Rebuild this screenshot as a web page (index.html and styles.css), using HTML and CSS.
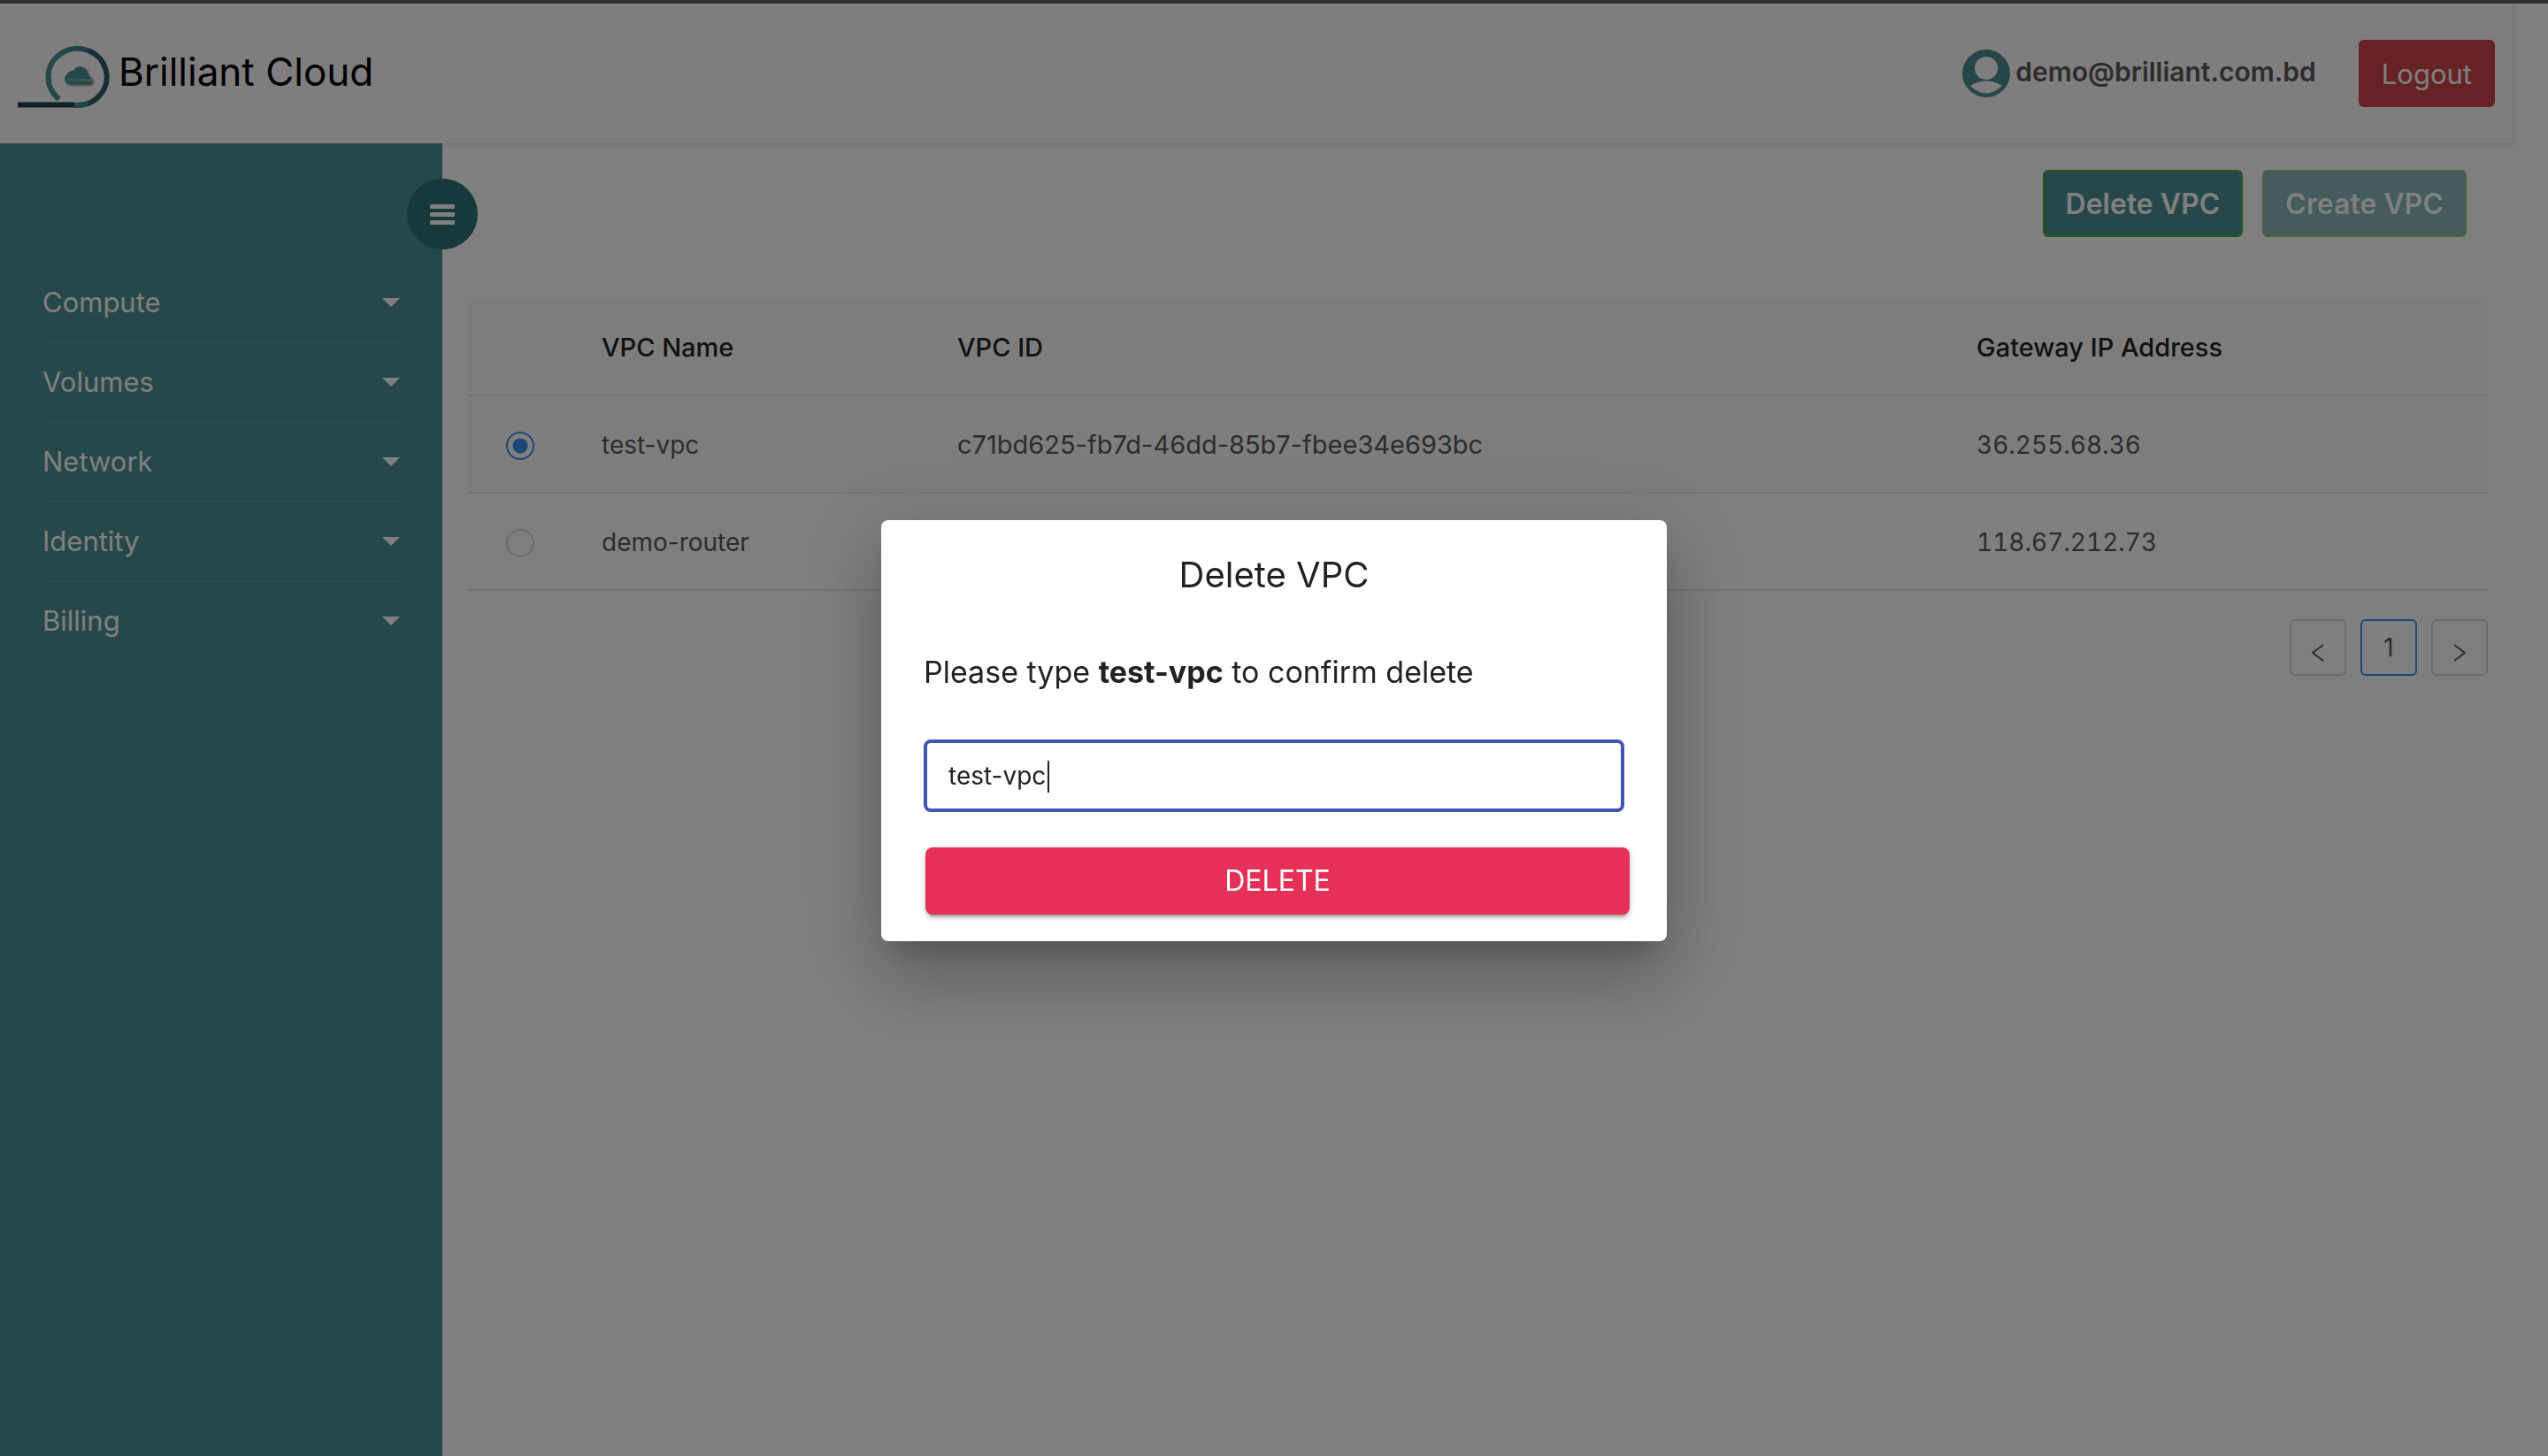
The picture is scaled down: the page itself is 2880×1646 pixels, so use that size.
FILE: index.html
```html
<!DOCTYPE html>
<html lang="en">
<head>
<meta charset="utf-8">
<title>Brilliant Cloud</title>
<link rel="stylesheet" href="styles.css">
</head>
<body>
<header class="topbar">
  <a class="brand" href="#">
    <svg class="brand-mark" viewBox="0 0 108 72" aria-hidden="true">
      <defs>
        <linearGradient id="ring" x1="0" y1="0" x2="1" y2="0">
          <stop offset="0" stop-color="#4e9193"/><stop offset=".66" stop-color="#3d8588"/><stop offset=".7" stop-color="#2f6474"/><stop offset="1" stop-color="#2b5a6c"/>
        </linearGradient>
      </defs>
      <path d="M47 61A33 32 0 1 1 68 68H62" fill="none" stroke="url(#ring)" stroke-width="6"/>
      <path d="M0 67.500H64" stroke="#1d424c" stroke-width="6" fill="none"/>
      <path class="cloud" d="M58 44a6 6 0 0 1-5-6 6 6 0 0 1 3-5 6 6 0 0 1 7-4 8.500 8.500 0 0 1 16 3 5 5 0 0 1 1 3 5 5 0 0 1 4 4 5 5 0 0 1-4 5z"/>
      <text class="cloud-text" x="69" y="41" text-anchor="middle">brilliant<tspan font-weight="700">cloud</tspan></text>
    </svg>
    <span class="brand-name">Brilliant Cloud</span>
  </a>
  <div class="account">
    <svg class="avatar" viewBox="0 0 54 54" aria-hidden="true">
      <circle cx="27" cy="27" r="27" fill="#4a8f91"/>
      <circle cx="27" cy="21" r="13" fill="#fffafc"/>
      <path d="M9 41Q27 30 45 41Q27 58 9 41Z" fill="#fffafc"/>
    </svg>
    <span class="email">demo@brilliant.com.bd</span>
    <button class="logout" type="button">Logout</button>
  </div>
</header>
<div class="shell">
  <nav class="sidebar" aria-label="Main">
    <button class="toggle" type="button" aria-label="Toggle menu">
      <svg viewBox="0 0 28 24" aria-hidden="true"><g fill="#fff"><rect y="1" width="28" height="5" rx="1"/><rect y="10" width="28" height="5" rx="1"/><rect y="19" width="28" height="5" rx="1"/></g></svg>
    </button>
    <ul class="menu">
      <li><a href="#">Compute</a></li>
      <li><a href="#">Volumes</a></li>
      <li><a href="#">Network</a></li>
      <li><a href="#">Identity</a></li>
      <li><a href="#">Billing</a></li>
    </ul>
  </nav>
  <main class="content">
    <div class="actions">
      <button class="action" type="button">Delete VPC</button>
      <button class="action" type="button" disabled>Create VPC</button>
    </div>
    <table class="vpcs">
      <colgroup><col class="c-pick"><col class="c-name"><col class="c-id"><col class="c-ip"></colgroup>
      <thead>
        <tr><td></td><th scope="col">VPC Name</th><th scope="col">VPC ID</th><th scope="col">Gateway IP Address</th></tr>
      </thead>
      <tbody>
        <tr class="selected">
          <td class="pick"><input type="radio" name="vpc" aria-label="test-vpc" checked></td>
          <td>test-vpc</td><td class="id">c71bd625-fb7d-46dd-85b7-fbee34e693bc</td><td class="ip">36.255.68.36</td>
        </tr>
        <tr>
          <td class="pick"><input type="radio" name="vpc" aria-label="demo-router"></td>
          <td>demo-router</td><td class="id"></td><td class="ip">118.67.212.73</td>
        </tr>
      </tbody>
    </table>
    <nav class="pager" aria-label="Pages">
      <button type="button" aria-label="Previous page"><svg viewBox="0 0 14 20" aria-hidden="true"><path d="M13 1L1 10l12 9"/></svg></button>
      <button type="button" class="current">1</button>
      <button type="button" aria-label="Next page"><svg viewBox="0 0 14 20" aria-hidden="true"><path d="M1 1l12 9-12 9"/></svg></button>
    </nav>
  </main>
</div>
<div class="overlay">
  <form class="dialog" role="dialog" aria-modal="true" aria-labelledby="dialog-title">
    <h2 id="dialog-title">Delete VPC</h2>
    <label for="confirm">Please type <b>test-vpc</b> to confirm delete</label>
    <div class="field">
      <input id="confirm" type="text" value="test-vpc">
      <span class="caret"></span>
    </div>
    <button class="confirm" type="submit">DELETE</button>
  </form>
</div>
</body>
</html>
```
FILE: styles.css
```css
* { box-sizing: border-box; }

body {
  margin: 0;
  min-height: 100vh;
  display: flex;
  flex-direction: column;
  border-top: 4px solid #5c5f66;
  background: #fff;
  font: 30px/40px Inter, "Liberation Sans", sans-serif;
  color: #595959;
}

button, input { font: inherit; margin: 0; }
a { color: inherit; text-decoration: none; }

/* Header */
.topbar {
  display: flex;
  align-items: center;
  justify-content: space-between;
  height: 158px;
  margin-right: 40px;
  padding: 0 20px;
  background: #fffafc;
  box-shadow: 2px 2px 6px rgba(0, 0, 0, .12);
}
.brand { display: flex; align-items: center; gap: 6px; color: #000; }
.brand-mark { width: 108px; height: 72px; margin-top: 8px; }
.cloud { fill: #498f90; filter: drop-shadow(2px 2px 1px rgba(0, 0, 0, .45)); }
.cloud-text { fill: #a9c9c9; font-size: 5px; }
.brand-name { padding-bottom: 4px; font-size: 44px; line-height: 56px; }
.account { display: flex; align-items: center; }
.avatar { width: 54px; height: 54px; }
.email { margin: 0 48px 0 6px; padding-bottom: 4px; font-weight: 600; }
.logout {
  height: 76px;
  padding: 2px 26px 0;
  border: 0;
  border-radius: 6px;
  background: #cc444a;
  color: #fff;
  font-size: 31px;
}

/* Sidebar */
.shell { flex: 1; display: flex; }
.sidebar {
  position: relative;
  width: 500px;
  padding: 136px 48px 0;
  background: #4e9193;
}
.toggle {
  position: absolute;
  top: 40px;
  right: -40px;
  width: 80px;
  height: 80px;
  display: grid;
  place-items: center;
  padding: 0;
  border: 0;
  border-radius: 50%;
  background: #2f7275;
}
.toggle svg { width: 28px; height: 24px; }
.menu { margin: 0; padding: 0; list-style: none; font-size: 31px; }
.menu a {
  display: flex;
  align-items: center;
  justify-content: space-between;
  height: 90px;
  border-bottom: 2px solid #589899;
  color: #fff;
}
.menu a::after {
  content: "";
  border: 10px solid transparent;
  border-top-color: #fff;
  border-bottom: 0;
}

/* Content */
.content { flex: 1; padding: 30px 68px 0 28px; }
.actions { display: flex; justify-content: flex-end; gap: 22px; padding-right: 24px; }
.action {
  height: 76px;
  padding: 2px 24px 0;
  border: 2px solid #52a83e;
  border-radius: 6px;
  background: #4e9193;
  color: #fff;
  font-size: 32px;
  font-weight: 600;
}
.action:disabled { opacity: .65; }

.vpcs {
  width: 100%;
  margin-top: 70px;
  border-collapse: separate;
  border-spacing: 0;
  table-layout: fixed;
  font-size: 28px;
}
.c-pick { width: 120px; }
.c-name { width: 402px; }
.c-id { width: 1152px; }
.vpcs th, .vpcs td {
  height: 110px;
  padding: 2px 32px 0;
  border-bottom: 2px solid #e6e6e6;
  text-align: left;
}
.vpcs th { color: #222; font-size: 29px; font-weight: 500; }
.vpcs .id { font-size: 29px; }
.vpcs .ip { font-variant-numeric: tabular-nums; }
.vpcs thead th, .vpcs thead td, .selected td { background: #fafafa; }
.vpcs thead td { border-top-left-radius: 8px; }
.vpcs thead th:last-child { border-top-right-radius: 8px; }
.vpcs .pick { padding: 4px 0 0 44px; }
.pick input {
  appearance: none;
  display: block;
  width: 32px;
  height: 32px;
  border: 2px solid #d9d9d9;
  border-radius: 50%;
  background: #fff;
}
.pick input:checked {
  border-color: #3c8df5;
  background: radial-gradient(#3c8df5 8px, #fff 9px);
}

.pager { display: flex; justify-content: flex-end; gap: 16px; margin-top: 32px; }
.pager button {
  width: 64px;
  height: 64px;
  display: grid;
  place-items: center;
  padding: 0;
  border: 2px solid #d9d9d9;
  border-radius: 6px;
  background: #fff;
  color: #595959;
  font-size: 28px;
}
.pager .current { border-color: #3c8df5; }
.pager svg { width: 14px; height: 20px; margin-top: 12px; fill: none; stroke: #595959; stroke-width: 2; }

/* Delete dialog */
.overlay {
  position: fixed;
  inset: 0;
  display: grid;
  place-items: center;
  padding-top: 6px;
  background: rgba(0, 0, 0, .5);
}
.dialog {
  width: 888px;
  display: flex;
  flex-direction: column;
  padding: 32px 48px 30px;
  border-radius: 8px;
  background: #fff;
  color: #222;
  box-shadow: 0 22px 30px -14px rgba(0, 0, 0, .2), 0 48px 76px 6px rgba(0, 0, 0, .14), 0 18px 92px 16px rgba(0, 0, 0, .12);
}
.dialog h2 { margin: 0 0 60px; font-size: 40px; line-height: 60px; font-weight: 400; text-align: center; }
.dialog label { font-size: 34px; line-height: 40px; }
.field { position: relative; margin-top: 56px; }
.field input {
  display: block;
  width: 100%;
  height: 82px;
  padding: 0 24px;
  border: 4px solid #4154b3;
  border-radius: 8px;
  outline: 0;
  background: #fff;
  color: #222;
  font-size: 28px;
}
.caret { position: absolute; left: 140px; top: 24px; width: 2px; height: 36px; background: #222; }
.confirm {
  height: 76px;
  margin: 40px -6px 0 2px;
  border: 0;
  border-radius: 8px;
  background: #e53158;
  color: #fff;
  font-size: 32px;
  box-shadow: 0 6px 2px -4px rgba(0, 0, 0, .2), 0 4px 4px rgba(0, 0, 0, .14), 0 2px 10px rgba(0, 0, 0, .12);
}
```
